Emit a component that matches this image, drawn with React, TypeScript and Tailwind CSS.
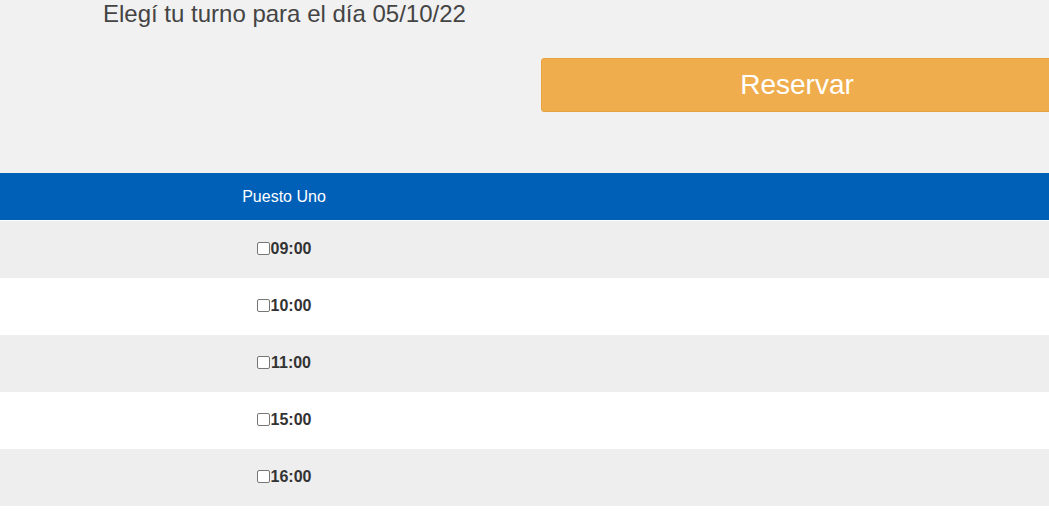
import React from "react";

const times = ["09:00", "10:00", "11:00", "15:00", "16:00"];

export default function App() {
  return (
    <div className="min-h-[512px] w-[1049px] overflow-hidden bg-white font-['Liberation_Sans',Arial,sans-serif]">
      <div className="bg-[#f1f1f1] pb-[61px]">
        <div className="pl-[103px] text-[24px] leading-[27px] text-[#444]">
          Elegí tu turno para el día 05/10/22
        </div>
        <div className="mt-[31px] flex">
          <div className="w-[541px] shrink-0" />
          <button className="h-[54px] w-[512px] shrink-0 rounded-[3px] border border-[#e8a33f] bg-[#efad4d] text-[28px] text-white">
            Reservar
          </button>
        </div>
      </div>
      <div className="flex h-[47px] items-center bg-[#0060b8]">
        <div className="w-[568px] text-center text-[16px] text-white">Puesto Uno</div>
      </div>
      <div className="h-[1px] bg-white" />
      {times.map((t, i) => (
        <div
          key={t}
          className={`flex h-[57px] items-center pb-[2px] ${i % 2 === 0 ? "bg-[#eeeeee]" : "bg-white"}`}
        >
          <div className="flex w-[568px] items-center justify-center">
            <span className="mr-px inline-block h-[13px] w-[13px] rounded-[2px] border border-[#767676] bg-white" />
            <span className="text-[16px] font-bold text-[#333]">{t}</span>
          </div>
        </div>
      ))}
    </div>
  );
}
